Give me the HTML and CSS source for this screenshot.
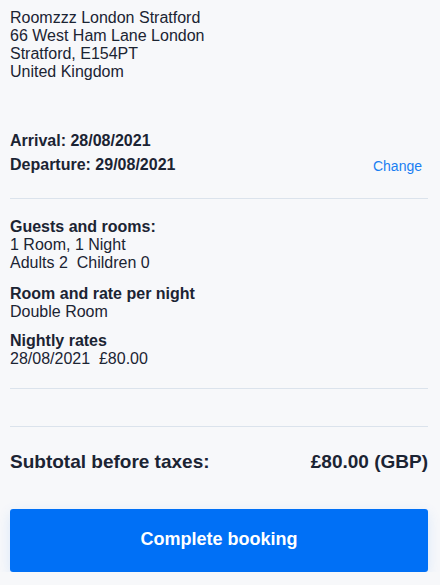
FILE: index.html
```html
<!DOCTYPE html>
<html lang="en">
<head>
<meta charset="utf-8">
<link rel="stylesheet" href="styles.css">
</head>
<body>
<main class="summary">
  <address class="hotel">
    <div>Roomzzz London Stratford</div>
    <div>66 West Ham Lane London</div>
    <div>Stratford, E154PT</div>
    <div>United Kingdom</div>
  </address>
  <section class="dates">
    <div class="date-line">Arrival: 28/08/2021</div>
    <div class="date-row">
      <div class="date-line">Departure: 29/08/2021</div>
      <a class="change" href="#">Change</a>
    </div>
  </section>
  <hr class="divider divider-dates">
  <section class="details">
    <div class="block">
      <div class="label">Guests and rooms:</div>
      <div>1 Room, 1 Night</div>
      <div>Adults 2&nbsp; Children 0</div>
    </div>
    <div class="block block-room">
      <div class="label">Room and rate per night</div>
      <div>Double Room</div>
    </div>
    <div class="block block-rates">
      <div class="label">Nightly rates</div>
      <div>28/08/2021&nbsp; £80.00</div>
    </div>
  </section>
  <hr class="divider divider-details">
  <hr class="divider divider-total">
  <div class="subtotal">
    <span>Subtotal before taxes:</span>
    <span>£80.00 (GBP)</span>
  </div>
  <button class="book" type="button">Complete booking</button>
</main>
</body>
</html>
```
FILE: styles.css
```css
html, body {
  margin: 0;
  padding: 0;
  background: #f7f8fa;
}
body {
  font-family: "Liberation Sans", Arial, Helvetica, sans-serif;
  color: #1b2433;
  font-size: 16px;
  line-height: 18px;
}
.summary {
  padding: 9px 12px 0 10px;
}
.hotel {
  font-style: normal;
}
.dates {
  margin-top: 48px;
}
.date-line {
  font-weight: bold;
  line-height: 24px;
}
.date-row {
  display: flex;
  justify-content: space-between;
  align-items: center;
}
.change {
  color: #1a7ff2;
  text-decoration: none;
  font-size: 14px;
  margin-right: 6px;
  margin-top: 2px;
}
.divider {
  border: 0;
  height: 1px;
  background: #dbe3ec;
  margin: 0;
}
.divider-dates {
  margin-top: 21px;
}
.details {
  padding-top: 19px;
}
.block-room {
  margin-top: 13px;
}
.block-rates {
  margin-top: 11px;
}
.label {
  font-weight: bold;
}
.divider-details {
  margin-top: 20px;
}
.divider-total {
  margin-top: 37px;
}
.subtotal {
  display: flex;
  justify-content: space-between;
  font-weight: bold;
  font-size: 19px;
  line-height: 22px;
  margin-top: 24px;
}
.book {
  display: block;
  width: 100%;
  margin-top: 36px;
  height: 63px;
  border: 0;
  border-radius: 3px;
  background: #0070f6;
  color: #fff;
  font-family: inherit;
  font-weight: bold;
  font-size: 18px;
  padding: 0 0 3px;
  box-shadow: 0 4px 14px rgba(0, 112, 246, 0.12);
}
```
